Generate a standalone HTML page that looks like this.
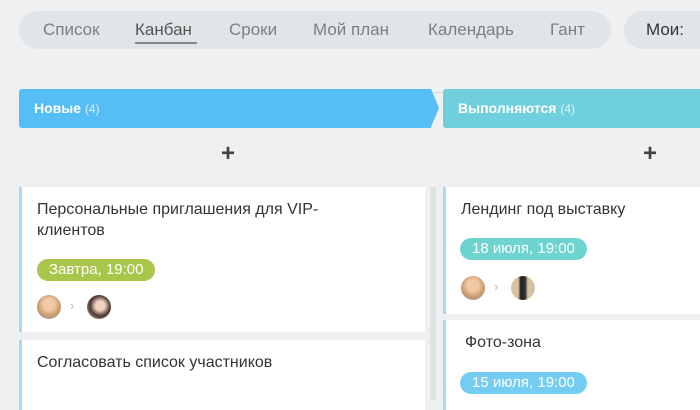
<!DOCTYPE html>
<html><head><meta charset="utf-8"><style>
*{margin:0;padding:0;box-sizing:border-box}
body{width:700px;height:400px;overflow:hidden;background:#eef0f2;font-family:"Liberation Sans","DejaVu Sans",sans-serif;position:relative}
.pill{position:absolute;top:11px;height:38px;background:#e2e5e8;border-radius:19px}
.tab{position:absolute;top:20px;font-size:17px;color:#7b7f84}
.line{position:absolute;top:92px;left:19px;right:0;height:1px;background:#d8dcdf}
.hdr{position:absolute;top:89px;height:39px;color:#fff;font-size:14px;font-weight:bold;line-height:39px;padding-left:15px}
.hdr span{font-weight:normal;font-size:12px;opacity:.8}
.plus{position:absolute;top:140px;font-size:24px;color:#444;font-weight:bold}
.card{position:absolute;background:#fff;border-left:3px solid #a7dbf4}
.t{position:absolute;font-size:16px;color:#333;line-height:21px}
.b{position:absolute;height:22px;border-radius:11px;color:#fff;font-size:15px;line-height:22px;padding:0 12px}
.av{position:absolute;width:24px;height:24px;border-radius:50%}
.ch{position:absolute;color:#bbb;font-size:13px}
</style></head><body>
<div class="pill" style="left:19px;width:592px"></div>
<div class="pill" style="left:624px;width:100px"></div>
<div class="tab" style="left:43px">Список</div>
<div class="tab" style="left:135px;color:#555">Канбан</div>
<div style="position:absolute;left:135px;top:42px;width:62px;height:2px;background:#888"></div>
<div class="tab" style="left:229px">Сроки</div>
<div class="tab" style="left:313px">Мой план</div>
<div class="tab" style="left:428px">Календарь</div>
<div class="tab" style="left:550px">Гант</div>
<div class="tab" style="left:646px;color:#333">Мои:</div>
<div class="line"></div>
<div class="hdr" style="left:19px;width:412px;background:#55bef5;border-radius:3px 0 0 3px">Новые <span>(4)</span></div>
<div style="position:absolute;left:431px;top:89px;width:0;height:0;border-top:19.5px solid transparent;border-bottom:19.5px solid transparent;border-left:8px solid #55bef5"></div>
<div class="hdr" style="left:443px;width:260px;background:#6fcfdd;border-radius:3px 0 0 3px">Выполняются <span>(4)</span></div>
<div class="plus" style="left:221px">+</div>
<div class="plus" style="left:643px">+</div>
<div style="position:absolute;left:430px;top:187px;width:6px;height:213px;background:#e0e3e5"></div>
<div class="card" style="left:19px;top:187px;width:406px;height:145px"></div>
<div class="t" style="left:37px;top:199px">Персональные приглашения для VIP-<br>клиентов</div>
<div class="b" style="left:37px;top:259px;background:#a8c64a">Завтра, 19:00</div>
<div class="av" style="left:37px;top:295px;background:radial-gradient(circle at 50% 40%,#f1c9a5 30%,#c99a6b 60%,#8fa9c9)"></div>
<div class="ch" style="left:70px;top:298px">›</div>
<div class="av" style="left:87px;top:295px;background:radial-gradient(circle at 55% 45%,#f0d2c0 25%,#4a3530 55%,#e8e4e0)"></div>
<div class="card" style="left:19px;top:340px;width:406px;height:70px"></div>
<div class="t" style="left:37px;top:352px">Согласовать список участников</div>
<div class="card" style="left:443px;top:187px;width:260px;height:127px"></div>
<div class="t" style="left:461px;top:199px">Лендинг под выставку</div>
<div class="b" style="left:460px;top:238px;background:#6fd3d0">18 июля, 19:00</div>
<div class="av" style="left:461px;top:276px;background:radial-gradient(circle at 50% 40%,#f1c9a5 30%,#c99a6b 60%,#8fa9c9)"></div>
<div class="ch" style="left:494px;top:279px">›</div>
<div class="av" style="left:511px;top:276px;background:linear-gradient(90deg,#d9c2a0 30%,#222 40%,#333 60%,#d9c2a0 70%)"></div>
<div class="card" style="left:443px;top:320px;width:260px;height:90px"></div>
<div class="t" style="left:465px;top:332px">Фото-зона</div>
<div class="b" style="left:460px;top:372px;background:#74cdf0">15 июля, 19:00</div>
</body></html>
